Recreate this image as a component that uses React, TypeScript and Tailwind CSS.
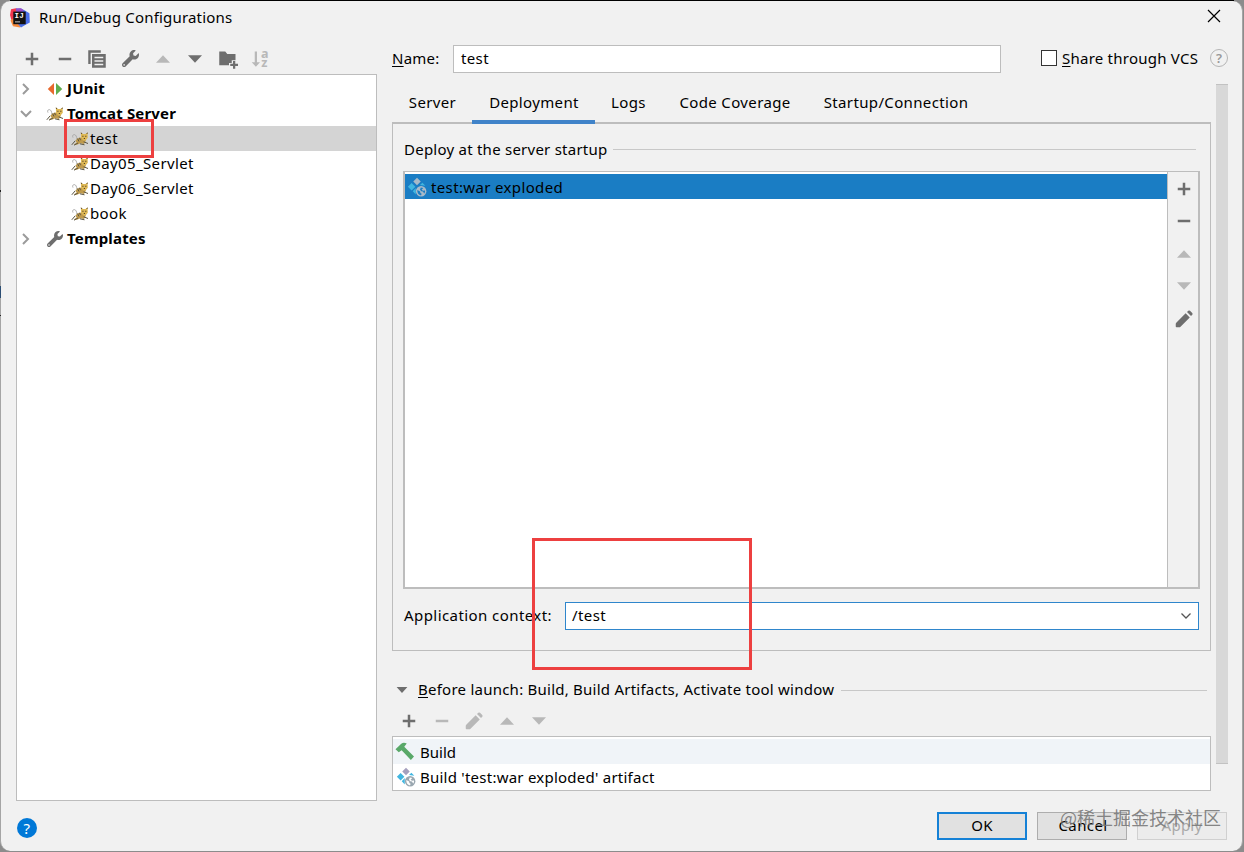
import type { ReactNode } from 'react';
import clsx from 'clsx';
import { FaWrench } from 'react-icons/fa';

type IconProps = { className?: string };

function Icon({ className, children }: IconProps & { children: ReactNode }) {
  return (
    <svg viewBox="0 0 16 16" className={clsx('size-5 shrink-0 overflow-visible', className)} fill="currentColor">
      {children}
    </svg>
  );
}

const Plus = ({ className }: IconProps) => (
  <Icon className={className}><path d="M7 3h2v4h4v2H9v4H7V9H3V7h4z" /></Icon>
);

const Minus = ({ className }: IconProps) => (
  <Icon className={className}><path d="M3 7h10v2H3z" /></Icon>
);

const Up = ({ className }: IconProps) => (
  <Icon className={className}><path d="M8 5l5.6 6H2.4z" /></Icon>
);

const Down = ({ className }: IconProps) => (
  <Icon className={className}><path d="M8 11L2.4 5h11.2z" /></Icon>
);

const Pencil = ({ className }: IconProps) => (
  <Icon className={className}>
    <path d="M9.3 3.4l3.3 3.3-7.4 7.4q-.4.4-1 .4H2q-.6 0-.6-.6v-2q0-.6.4-1zM10.4 2.4l1-1q.7-.6 1.4 0l1.8 1.8q.6.7 0 1.4l-1 1z" />
  </Icon>
);

const Copy = () => (
  <Icon>
    <path d="M1 1h10v1.9H2.9V12H1z" />
    <path fillRule="evenodd" d="M4 4h11v11H4zM6 6.1v1.2h7V6.1zM6 8.9v1.2h7V8.9zM6 11.7v1.2h7v-1.2z" />
  </Icon>
);

const FolderAdd = () => (
  <Icon>
    <path d="M1 2h4.8l1.6 2H14v5h-3v2.2H8.8V13H1z" />
    <path d="M12 9.5h1.8v2.2H16v1.8h-2.2v2.2H12v-2.2H9.8v-1.8H12z" />
  </Icon>
);

const SortAz = () => (
  <Icon className="text-[#b8b8b8]">
    <path d="M3 2h1.8v8.6h2.4L3.9 14.2.6 10.6H3z" />
    <text x="8" y="6.8" fontSize="10" fontWeight="700" fontFamily="Noto Sans, sans-serif">a</text>
    <text x="8.2" y="14.6" fontSize="10" fontWeight="700" fontFamily="Noto Sans, sans-serif">z</text>
  </Icon>
);

const Chevron = ({ open }: { open?: boolean }) => (
  <svg viewBox="0 0 12 12" className="size-3 shrink-0 fill-none stroke-[#9b9b9b] stroke-2">
    <path d={open ? 'M1 3l5 5 5-5' : 'M3 1l5 5-5 5'} />
  </svg>
);

const JUnit = () => (
  <Icon>
    <path fill="#e8692e" d="M6.4 3.2v9.6L1.4 8z" />
    <path fill="#5fad4e" d="M8 3.2v9.6L13 8z" />
  </Icon>
);

// Cat with the tail on the left and the head on the right
const Tomcat = () => (
  <svg viewBox="0 0 18 16" className="h-4 w-[18px] shrink-0">
    <path d="M6 8.6C5.6 5.3 4.9 3.7 3.3 3.6 1.7 3.6 1.2 5.2 2 6.6" fill="none" stroke="#a5a5a5" strokeWidth=".9" />
    <path d="M4.5 9.7C6 7.3 8.5 6.2 11 6.5l4 3-2 3.4-3.5-.6-3 1.3-3.5.5 1-1.7 1.6-.6z" fill="#bf9a4c" />
    <path d="M9.9 1.5l2.2 1.5h2.3l2.1-1.6.3 5.3-2.2 2.7h-2.4L10 6.5z" fill="#dfb955" />
    <path d="M.8 13.8l3.4-4M3 14.2l4-2.2M9 12.8l4.5 1M12.6 10.8l4.4 1.7M6.6 7.6l1.3 2.8M8.5 6.8l1 2.4" fill="none" stroke="#5a5442" strokeWidth="1" />
    <path d="M11.3 4.7h1.2v1.1h-1.2zM14.2 4.7h1.2v1.1h-1.2zM12.8 7.1h1.2v.8h-1.2zM9.8 1.2l1.6 1.6-1.4.3zM16.7 1.2l-1.5 1.6 1.3.3z" fill="#55452b" />
  </svg>
);

const Artifact = ({ selected }: { selected?: boolean }) => (
  <Icon>
    <path fill={selected ? '#a7b9c8' : '#a5a0bd'} d="M8 .6L11 3.6 8 6.6 5 3.6z" />
    <path fill="#40b6e0" d="M3.7 4.8l3 3-3 3-3-3z" />
    <path fill="#40b6e0" d="M7 8.8v5.2L4.6 11.4zM10.4 6.4l1.9-1.9 2.4 2.4z" />
    <circle cx="11.3" cy="11.4" r="4.2" fill={selected ? '#a9bac8' : '#9aa7b0'} />
    <path fill={selected ? '#1a7dc4' : '#fff'} d="M8.3 10.3l2.2 1.2.2 1.2 1 .7-.4 1.2C9.4 14.4 8 12.5 8.3 10.3zM11 8.4l2 .4-1.3 1.3 1.1.8 1.6-.2c.1 1.2-.1 1.8-.7 2.5l-.9-1.7-1.4-.2-1-1.2z" />
  </Icon>
);

const Hammer = () => (
  <Icon>
    <path fill="#59a869" d="M.4 5.8L5 1.3Q7 .1 9.4 1.2L7.4 3.8 15.2 11.6 12.7 14.4 5.3 6.5 3 8.1z" />
  </Icon>
);

const IdeaLogo = () => (
  <svg viewBox="0 0 20 20" className="size-5 shrink-0">
    <path d="M1 1.2l5-1 4 3-4 12-4.7-3.4L0 7z" fill="#f0364f" />
    <path d="M.5 12.5L4 10l8 7-2 2.5-7-1.3z" fill="#f58b3c" />
    <path d="M6 .5h5l3 1.4 5.4 3.4.4 9.2-4.6 2.5-4.2 2.6L8 16z" fill="#4a6fe8" />
    <path d="M6 .4L11 .3l3 2.2-6 3z" fill="#9a4cc5" />
    <path d="M3.3 3.6h12.4v12.6H3.3z" fill="#111" />
    <text x="4.6" y="10.4" fontSize="7.5" fontWeight="700" fill="#fff" fontFamily="Liberation Mono, monospace">IJ</text>
    <path d="M5 13.4h5v1H5z" fill="#ccc" />
  </svg>
);

type TreeItem = { label: string; icon: ReactNode; group?: boolean; open?: boolean; selected?: boolean };

const wrench = <FaWrench className="ml-px size-4 shrink-0 text-[#6e6e6e]" />;

const tree: TreeItem[] = [
  { label: 'JUnit', icon: <JUnit />, group: true },
  { label: 'Tomcat Server', icon: <Tomcat />, group: true, open: true },
  { label: 'test', icon: <Tomcat />, selected: true },
  { label: 'Day05_Servlet', icon: <Tomcat /> },
  { label: 'Day06_Servlet', icon: <Tomcat /> },
  { label: 'book', icon: <Tomcat /> },
  { label: 'Templates', icon: wrench, group: true },
];

const tabs = [
  { label: 'Server', width: 'w-[81px]' },
  { label: 'Deployment', width: 'w-[122px]', active: true },
  { label: 'Logs', width: 'w-[67px]' },
  { label: 'Code Coverage', width: 'w-[146px]' },
  { label: 'Startup/Connection', width: 'w-44' },
];

function TreeRow({ item }: { item: TreeItem }) {
  return (
    <div className={clsx('flex h-[25px] items-center', item.selected && 'bg-[#d4d4d4]')}>
      {item.group ? (
        <>
          <span className="flex w-7 pl-[3px]">
            <Chevron open={item.open} />
          </span>
          <span className="flex w-[22px] pl-px">{item.icon}</span>
          <span className="pb-0.5 font-bold tracking-[0.17px]">{item.label}</span>
        </>
      ) : (
        <>
          <span className="ml-[54px] mr-px">{item.icon}</span>
          <span className="pb-0.5 tracking-[0.36px]">{item.label}</span>
        </>
      )}
    </div>
  );
}

function Sidebar() {
  return (
    <div className="flex w-[361px] flex-col">
      <div className="flex h-[39px] items-center gap-[12.7px] pl-1.5 pt-2 text-[#6e6e6e]">
        <Plus />
        <Minus />
        <Copy />
        <span className="flex w-5 justify-center"><FaWrench className="size-[17px]" /></span>
        <Up className="text-[#b8b8b8]" />
        <Down />
        <FolderAdd />
        <SortAz />
      </div>
      <div className="h-[727px] border border-[#bdbdbd] bg-white pt-px">
        {tree.map((item) => (
          <TreeRow key={item.label} item={item} />
        ))}
      </div>
    </div>
  );
}

function DeploymentPanel() {
  return (
    <div className="flex h-[529px] w-[819px] flex-col border border-t-2 border-[#bdbdbd] px-2.5">
      <div className="flex h-[47px] items-center pt-1">
        <span className="w-[210px] whitespace-nowrap pb-0.5 pl-px">Deploy at the server startup</span>
        <span className="mr-1 h-px flex-1 bg-[#c8c8c8]" />
      </div>
      <div className="flex h-[418px] border-2 border-t border-[#bdbdbd]">
        <div className="flex-1 bg-white pt-0.5">
          <div className="flex h-[25px] items-center bg-[#1a7dc4] pl-0.5">
            <Artifact selected />
            <span className="ml-1 tracking-[0.36px]">test:war exploded</span>
          </div>
        </div>
        <div className="flex w-[31px] flex-col items-center gap-[12.4px] border-l border-[#bdbdbd] pt-[7px] pl-px text-[#6e6e6e]">
          <Plus />
          <Minus />
          <Up className="text-[#b8b8b8]" />
          <Down className="text-[#b8b8b8]" />
          <Pencil />
        </div>
      </div>
      <div className="mt-[13px] flex h-7 items-center">
        <span className="w-[162px] whitespace-nowrap pb-0.5 pl-px tracking-[0.43px]">Application context:</span>
        <div className="mr-px flex h-7 flex-1 items-center justify-between border border-[#2f86cc] bg-white px-1.5">
          <span className="pb-0.5 tracking-[0.4px]">/test</span>
          <svg viewBox="0 0 12 12" className="size-3 fill-none stroke-[#555]">
            <path d="M1.5 3.5l4.5 4.5 4.5-4.5" strokeWidth="1.3" />
          </svg>
        </div>
      </div>
    </div>
  );
}

function BeforeLaunch() {
  return (
    <div className="w-[819px]">
      <div className="mt-[26px] flex h-[26px] items-center">
        <span className="flex w-[26px] justify-center pr-1.5">
          <svg viewBox="0 0 12 12" className="size-3 fill-[#6e6e6e]">
            <path d="M.6 3h10.8L6 9z" />
          </svg>
        </span>
        <span className="w-[423px] whitespace-nowrap pb-0.5"><u className="underline-offset-2">B</u>efore launch: Build, Build Artifacts, Activate tool window</span>
        <span className="mr-1 h-px flex-1 bg-[#c8c8c8]" />
      </div>
      <div className="flex h-[33px] items-center gap-[12.5px] pl-[7px] pt-[3px] text-[#b8b8b8]">
        <Plus className="text-[#6e6e6e]" />
        <Minus />
        <Pencil />
        <Up />
        <Down />
      </div>
      <div className="h-[55px] border border-[#bdbdbd] bg-white pt-0.5">
        <div className="flex h-[25px] items-center bg-[#f0f4f8] pl-0.5">
          <Hammer />
          <span className="ml-[5px] tracking-normal">Build</span>
        </div>
        <div className="flex h-[25px] items-center pl-[3px]">
          <Artifact />
          <span className="ml-1">Build 'test:war exploded' artifact</span>
        </div>
      </div>
    </div>
  );
}

function Settings() {
  return (
    <div className="ml-[15px] flex flex-1 flex-col">
      <div className="mt-2.5 flex h-7 items-center">
        <span className="w-[61px] pb-0.5"><u className="underline-offset-2">N</u>ame:</span>
        <div className="flex h-7 w-[548px] items-center border border-[#bdbdbd] bg-white pb-0.5 pl-[7px] tracking-[0.36px]">test</div>
        <span className="mb-0.5 ml-10 size-4 border border-[#333] bg-white" />
        <span className="ml-[5px] w-[148px] whitespace-nowrap pb-0.5"><u className="underline-offset-2">S</u>hare through VCS</span>
        <span className="mb-0.5 flex size-[18px] items-center justify-center rounded-full border border-[#b5b5b5] text-[13px] font-semibold tracking-normal text-[#999]">?</span>
      </div>
      <div className="flex">
        <div className="w-[824px] pt-[9px]">
          <div className="flex tracking-[0.36px]">
            {tabs.map((tab) => (
              <div key={tab.label} className={clsx('flex h-10 items-center justify-center', tab.width)}>
                {tab.label}
              </div>
            ))}
          </div>
          <div className="relative">
            <DeploymentPanel />
            <span className="absolute -top-0.5 left-20 h-1 w-[123px] bg-[#4083c9]" />
          </div>
          <BeforeLaunch />
        </div>
        <div className="mt-[11px] h-[680px] w-3 border-y border-[#c2c2c2] bg-[#d8d8d8]" />
      </div>
    </div>
  );
}

function Footer() {
  return (
    <div className="relative flex h-10 items-start gap-2.5 pl-4 pr-[15px] pt-[11px]">
      <span className="mr-auto mt-1.5 flex size-5 items-center justify-center rounded-full bg-[#0078d7] text-white">?</span>
      <button className="h-7 w-[90px] border-2 border-[#1581d6] bg-[#e1e1e1] pb-0.5">OK</button>
      <button className="h-7 w-[90px] border border-[#adadad] bg-[#e1e1e1] pb-0.5 pl-0.5 tracking-[0.4px]">Cancel</button>
      <button className="h-7 w-[90px] border border-[#d0d0d0] bg-[#ececec] pb-0.5 text-[#a8a8a8]">Apply</button>
      <span className="absolute right-[21px] top-1.5 whitespace-nowrap font-['Noto_Sans_CJK_SC',sans-serif] text-[18px] tracking-normal text-[#777]/90">@稀土掘金技术社区</span>
    </div>
  );
}

export default function App() {
  return (
    <div className="relative h-[852px] w-[1244px] overflow-hidden bg-[#8c8c8c] pt-px font-['Noto_Sans','Noto_Sans_CJK_SC',sans-serif] text-[15px] leading-5 tracking-[0.24px] text-black">
      <span className="absolute left-2.5 top-0 h-px w-[1224px] bg-black" />
      <div className="h-[850px] w-[1243px] rounded-[10px] border-x border-[#a5a5a5] bg-[#f1f1f1]">
        <div className="flex h-[34px] items-center pl-[9px] pr-[21px]">
          <IdeaLogo />
          <span className="ml-[9px] flex-1 pb-0.5 tracking-[0.18px]">Run/Debug Configurations</span>
          <svg viewBox="0 0 14 14" className="mb-1 size-3.5 fill-none stroke-black">
            <path d="M1 1l12 12M13 1L1 13" strokeWidth="1.2" />
          </svg>
        </div>
        <div className="flex h-[766px] pl-[15px]">
          <Sidebar />
          <Settings />
        </div>
        <Footer />
      </div>

      {/* Slivers of the window behind the dialog */}
      <span className="absolute left-0 top-[190px] h-0.5 w-px bg-[#222]" />
      <span className="absolute left-0 top-[286px] h-3 w-px bg-[#2b4d73]" />
      <span className="absolute left-0 top-[315px] h-px w-px bg-[#222]" />

      {/* Highlight frames */}
      <span className="absolute left-16 top-[119px] h-[39px] w-[90px] border-3 border-[#ed4040]" />
      <span className="absolute left-[532px] top-[538px] h-[132px] w-[220px] border-3 border-[#ed4040]" />
    </div>
  );
}
